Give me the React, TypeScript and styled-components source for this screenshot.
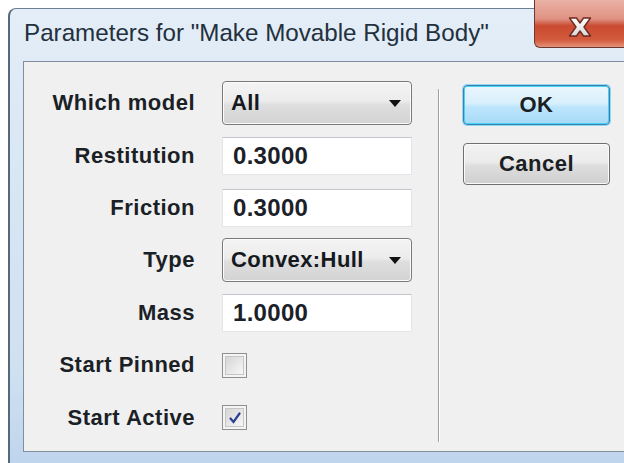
import React from "react";
import styled, { createGlobalStyle } from "styled-components";

const GlobalStyle = createGlobalStyle`
  html, body {
    margin: 0;
    padding: 0;
    background: #ffffff;
    overflow: hidden;
  }
  body {
    font-family: "Liberation Sans", Arial, sans-serif;
  }
`;

const Page = styled.div`
  width: 624px;
  height: 463px;
  overflow: hidden;
`;

const Window = styled.div`
  position: relative;
  box-sizing: border-box;
  margin: 8px 0 0 8px;
  width: 660px;
  height: 455px;
  border-left: 2px solid #56687a;
  border-top: 1px solid #6d7f91;
  border-top-left-radius: 8px;
  background: linear-gradient(180deg, #e4eef8 0%, #dde9f5 20%, #cfe0f1 80%, #bfd5ed 100%);
  padding: 0 0 0 13px;
`;

const TitleBar = styled.div`
  height: 52px;
  display: flex;
  align-items: center;
  padding-left: 1px;
  padding-bottom: 4px;
  box-sizing: border-box;
  font-size: 24.2px;
  color: #23303d;
`;

const CloseButton = styled.div`
  position: absolute;
  top: -9px;
  left: 524px;
  width: 120px;
  height: 48px;
  box-sizing: border-box;
  border: 1px solid #6b3a33;
  border-top: none;
  border-bottom-left-radius: 6px;
  background: linear-gradient(180deg, #eab2a6 0%, #df9282 40%, #c94a30 55%, #d35b3e 85%, #e3937a 100%);
  display: flex;
  align-items: center;
  padding-left: 31px;
  padding-top: 6px;
`;

const Client = styled.div`
  box-sizing: border-box;
  height: 391px;
  background: #f0f0f0;
  border: 1px solid #7f8fa0;
  display: flex;
  align-items: flex-start;
`;

const Form = styled.div`
  padding-top: 15px;
  display: flex;
  flex-direction: column;
`;

const Row = styled.div`
  height: 52.4px;
  display: grid;
  grid-template-columns: 171px 190px;
  column-gap: 27px;
  align-items: center;
`;

const Label = styled.div`
  text-align: right;
  font-weight: bold;
  font-size: 22px;
  color: #1b1f26;
  letter-spacing: 0.5px;
`;

const Combo = styled.div`
  box-sizing: border-box;
  height: 44px;
  border: 1px solid #7a7a7a;
  border-radius: 4px;
  background: linear-gradient(180deg, #f4f4f4 0%, #ececec 45%, #dedede 55%, #d3d3d3 100%);
  box-shadow: inset 0 0 0 1px #fbfbfb;
  display: flex;
  align-items: center;
  justify-content: space-between;
  padding: 0 10px 0 8px;
  font-weight: bold;
  font-size: 22px;
  color: #15191e;
  letter-spacing: 0.4px;
`;

const Arrow = styled.span`
  width: 0;
  height: 0;
  border-left: 6px solid transparent;
  border-right: 6px solid transparent;
  border-top: 7px solid #111111;
`;

const Field = styled.div`
  box-sizing: border-box;
  height: 38px;
  background: #ffffff;
  border: 1px solid #e2e6ea;
  border-top-color: #c2c6cc;
  display: flex;
  align-items: center;
  padding-left: 10px;
  font-weight: bold;
  font-size: 24px;
  color: #1b2128;
  letter-spacing: 0.3px;
`;

const Check = styled.div`
  box-sizing: border-box;
  width: 25px;
  height: 25px;
  border: 1px solid #8e8f8f;
  background: #f4f4f4;
  padding: 2px;
`;

const CheckInner = styled.div`
  box-sizing: border-box;
  width: 100%;
  height: 100%;
  border: 1px solid #c6c6c6;
  background: linear-gradient(135deg, #d6d6d6 0%, #e6e6e6 50%, #f7f7f7 100%);
  display: flex;
  align-items: center;
  justify-content: center;
`;

const Separator = styled.div`
  margin: 27px 0 0 26px;
  width: 1px;
  height: 353px;
  background: #a0a0a0;
  box-shadow: 1px 0 0 #ffffff;
`;

const Buttons = styled.div`
  margin: 23px 0 0 24px;
  display: flex;
  flex-direction: column;
  gap: 18px;
  width: 147px;
`;

const Button = styled.div<{ $default?: boolean }>`
  box-sizing: border-box;
  height: ${(p) => (p.$default ? "40px" : "42px")};
  border-radius: 4px;
  border: 1px solid ${(p) => (p.$default ? "#3c7fb1" : "#707070")};
  background: ${(p) =>
    p.$default
      ? "linear-gradient(180deg, #eaf6fd 0%, #d9f0fc 45%, #bee6fd 55%, #a7d9f5 100%)"
      : "linear-gradient(180deg, #f2f2f2 0%, #ebebeb 45%, #dddddd 55%, #cfcfcf 100%)"};
  box-shadow: ${(p) => (p.$default ? "inset 0 0 0 1px #48d2f4, 0 0 0 1px #8fd8f4" : "inset 0 0 0 1px #fafafa")};
  display: flex;
  align-items: center;
  justify-content: center;
  font-weight: bold;
  font-size: 22px;
  color: #1b1f24;
  letter-spacing: 0.5px;
`;

const CloseGlyph = () => (
  <svg width="28" height="22" viewBox="0 0 28 22">
    <defs>
      <linearGradient id="xfill" x1="0" y1="0" x2="0" y2="1">
        <stop offset="0" stopColor="#ffffff" />
        <stop offset="1" stopColor="#d8d8d8" />
      </linearGradient>
    </defs>
    <path
      d="M3.5 2 L10.5 2 L14 7 L17.5 2 L24.5 2 L18 11 L24.5 20 L17.5 20 L14 15 L10.5 20 L3.5 20 L10 11 Z"
      fill="url(#xfill)"
      stroke="#6e2a20"
      strokeWidth="1.4"
      strokeLinejoin="round"
    />
  </svg>
);

const Tick = () => (
  <svg width="14" height="14" viewBox="0 0 14 14">
    <path d="M2.5 7.5 L5.5 11 L11.5 2.5" fill="none" stroke="#2b3f8f" strokeWidth="2.2" strokeLinecap="round" />
  </svg>
);

type CheckBoxProps = { checked?: boolean };

const CheckBox = ({ checked }: CheckBoxProps) => (
  <div>
    <Check>
      <CheckInner>{checked && <Tick />}</CheckInner>
    </Check>
  </div>
);

const App = () => (
  <Page>
    <GlobalStyle />
    <Window>
      <CloseButton>
        <CloseGlyph />
      </CloseButton>
      <TitleBar>Parameters for "Make Movable Rigid Body"</TitleBar>
      <Client>
        <Form>
          <Row>
            <Label>Which model</Label>
            <Combo>
              All
              <Arrow />
            </Combo>
          </Row>
          <Row>
            <Label>Restitution</Label>
            <Field>0.3000</Field>
          </Row>
          <Row>
            <Label>Friction</Label>
            <Field>0.3000</Field>
          </Row>
          <Row>
            <Label>Type</Label>
            <Combo>
              Convex:Hull
              <Arrow />
            </Combo>
          </Row>
          <Row>
            <Label>Mass</Label>
            <Field>1.0000</Field>
          </Row>
          <Row>
            <Label>Start Pinned</Label>
            <CheckBox />
          </Row>
          <Row>
            <Label>Start Active</Label>
            <CheckBox checked />
          </Row>
        </Form>
        <Separator />
        <Buttons>
          <Button $default>OK</Button>
          <Button>Cancel</Button>
        </Buttons>
      </Client>
    </Window>
  </Page>
);

export default App;
